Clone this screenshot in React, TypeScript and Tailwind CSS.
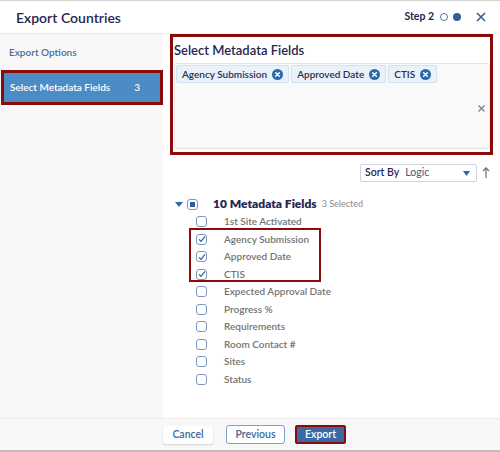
import React from 'react';

const fields = [
  { name: '1st Site Activated', checked: false },
  { name: 'Agency Submission', checked: true },
  { name: 'Approved Date', checked: true },
  { name: 'CTIS', checked: true },
  { name: 'Expected Approval Date', checked: false },
  { name: 'Progress %', checked: false },
  { name: 'Requirements', checked: false },
  { name: 'Room Contact #', checked: false },
  { name: 'Sites', checked: false },
  { name: 'Status', checked: false },
];

const Tag: React.FC<{ label: string }> = ({ label }) => (
  <div className="flex items-center gap-[5px] h-[18px] px-[5px] bg-[#e9f1f9] border border-[#d3e2f0] rounded-[2px] text-[10px] font-semibold text-[#2b2d55]">
    {label}
    <svg width="11" height="11" viewBox="0 0 12 12">
      <circle cx="6" cy="6" r="6" fill="#2f6aa8" />
      <path d="M4 4l4 4M8 4l-4 4" stroke="#fff" strokeWidth="1.6" strokeLinecap="round" />
    </svg>
  </div>
);

const Checkbox: React.FC<{ checked: boolean }> = ({ checked }) => (
  <div className="w-[11px] h-[11px] border-[1.5px] border-[#7d98be] rounded-[3px] bg-white flex items-center justify-center">
    {checked && (
      <svg width="8" height="8" viewBox="0 0 8 8">
        <path d="M1 4.3l2 2 4-5" stroke="#2f5e9a" strokeWidth="1.2" fill="none" />
      </svg>
    )}
  </div>
);

export default function App() {
  const font = { fontFamily: 'Lato, "Open Sans", sans-serif' };
  return (
    <div className="w-[500px] h-[452px] bg-white flex flex-col border-t border-[#d4d4d4]" style={font}>
      {/* header */}
      <div className="h-[32px] flex items-center justify-between pl-4 pr-[14px] shadow-[0_1px_2px_rgba(0,0,0,0.08)] z-10">
        <div className="text-[14px] font-semibold text-[#27264f]">Export Countries</div>
        <div className="flex items-center">
          <span className="text-[10.5px] font-bold text-[#27264f] mr-[6px]">Step 2</span>
          <span className="w-[8px] h-[8px] rounded-full border border-[#4b76a8] mr-[5px]" />
          <span className="w-[8px] h-[8px] rounded-full bg-[#2f5e9a] mr-[15px]" />
          <svg width="10" height="10" viewBox="0 0 10 10">
            <path d="M1 1l8 8M9 1l-8 8" stroke="#2f5e9a" strokeWidth="1.6" />
          </svg>
        </div>
      </div>

      <div className="flex flex-1 min-h-0">
        {/* sidebar */}
        <div className="w-[163px] bg-[#f8f8f8] pt-[12px]">
          <div className="text-[10px] font-semibold text-[#4a6d96] pl-[9px] h-[14px] flex items-center">Export Options</div>
          <div className="mt-[11px] ml-[1px] w-[162px] h-[35px] bg-[#4b8bc6] border-[3px] border-[#8b0a0a] flex items-center justify-between pl-[6px] pr-[20px] text-[10px] font-semibold text-white">
            <span>Select Metadata Fields</span>
            <span>3</span>
          </div>
        </div>

        {/* main */}
        <div className="flex-1 flex flex-col">
          <div className="mx-[7px] mt-[1px] h-[121px] border-[3px] border-[#8b0a0a] pl-[1px] pr-0">
            <div className="text-[13px] font-semibold text-[#27264f] h-[26px] flex items-center pt-[1px]">Select Metadata Fields</div>
            <div className="relative h-[86px] bg-[#f9f9f9] border border-[#e4e4e4] rounded-[2px] flex gap-[2px] p-[1px] items-start">
              <Tag label="Agency Submission" />
              <Tag label="Approved Date" />
              <Tag label="CTIS" />
              <svg className="absolute right-[4px] top-[41px]" width="7" height="7" viewBox="0 0 7 7">
                <path d="M0.5 0.5l6 6M6.5 0.5l-6 6" stroke="#7d7d92" strokeWidth="1.2" />
              </svg>
            </div>
          </div>

          <div className="flex justify-end items-center mt-[9px] pr-[10px]">
            <div className="w-[117px] h-[18px] border border-[#cfd5de] rounded-[2px] flex items-center px-[4px] text-[10.5px]">
              <span className="font-semibold text-[#27264f]">Sort By</span>
              <span className="ml-[6px] text-[#4a5a7a] flex-1">Logic</span>
              <svg width="7" height="5" viewBox="0 0 7 5" className="mr-[2px]">
                <path d="M0 0h7L3.5 5z" fill="#2f6aa8" />
              </svg>
            </div>
            <svg width="8" height="12" viewBox="0 0 8 12" className="ml-[5px]">
              <path d="M4 11V1M1 4l3-3 3 3" stroke="#777" strokeWidth="1.3" fill="none" />
            </svg>
          </div>

          <div className="pl-[12px] mt-[14px]">
            <div className="flex items-center h-[16px]">
              <svg width="8" height="5" viewBox="0 0 8 5">
                <path d="M0 0h8L4 5z" fill="#2f6aa8" />
              </svg>
              <div className="ml-[4px] w-[11px] h-[11px] border-[1.5px] border-[#7d98be] rounded-[3px] bg-white flex items-center justify-center">
                <div className="w-[5px] h-[5px] bg-[#2f5e9a]" />
              </div>
              <span className="ml-[15px] text-[12px] font-extrabold text-[#27264f]">10 Metadata Fields</span>
              <span className="ml-[5px] text-[9px] text-[#8a8a8a]">3 Selected</span>
            </div>
            <div className="relative pl-[21px] mt-[1px]">
              <div className="absolute left-[14px] top-[15px] w-[132px] h-[54px] border-2 border-[#8b0a0a]" />
              {fields.map((f) => (
                <div key={f.name} className="flex items-center h-[17.5px]">
                  <Checkbox checked={f.checked} />
                  <span className="ml-[17px] text-[10px] font-semibold text-[#747474]">{f.name}</span>
                </div>
              ))}
            </div>
          </div>
        </div>
      </div>

      {/* footer */}
      <div className="h-[34px] bg-[#f8f8f8] border-t border-[#ececec] border-b-2 border-b-[#bdbdbd] flex items-center pl-[163px] gap-[13px]">
        <button className="w-[50px] h-[18px] bg-white rounded-[3px] shadow-[0_1px_2px_rgba(0,0,0,0.15)] text-[10.5px] font-semibold text-[#3f6797]">Cancel</button>
        <button className="w-[59px] h-[19px] bg-white rounded-[3px] border border-[#7aa0cc] text-[10.5px] font-semibold text-[#3f6797]">Previous</button>
        <button className="w-[51px] h-[19px] bg-[#3a6aa3] border-2 border-[#8b0a0a] rounded-[2px] text-[10.5px] font-semibold text-white -ml-[3px]">Export</button>
      </div>
    </div>
  );
}
